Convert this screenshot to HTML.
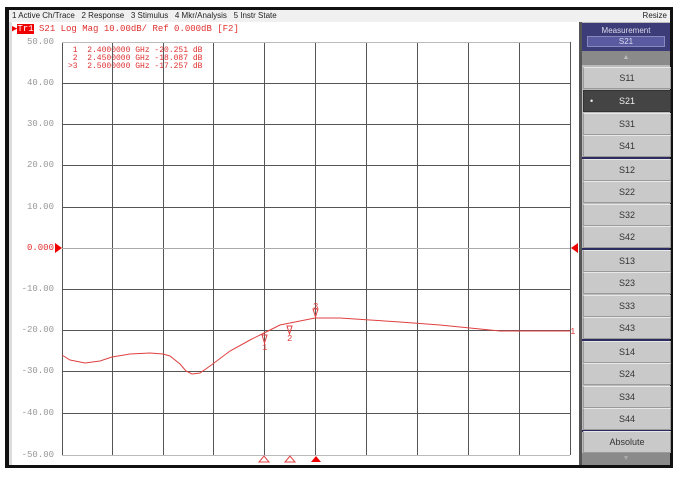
<!DOCTYPE html><html><head><style>
body{margin:0;width:678px;height:477px;background:#fff;position:relative;overflow:hidden;font-family:"Liberation Sans",sans-serif}
.a{position:absolute}
.btn{position:absolute;left:583px;width:86px;height:20px;background:#c9c9c9;border:1px solid #9a9a9a;border-top-color:#e8e8e8;font-size:9px;color:#333;text-align:center;line-height:20px}
.sep{position:absolute;left:582px;width:88px;height:2px;background:#2c2c5e}
.lab{position:absolute;left:14px;width:40px;text-align:right;font:9px "Liberation Mono",monospace;color:#999}
</style></head><body>
<div class="a" style="left:5px;top:7px;width:668px;height:461px;background:#111"></div>
<div class="a" style="left:9px;top:10px;width:661px;height:455px;background:#fff"></div>
<div class="a" style="left:9px;top:10px;width:661px;height:12px;background:#f0f0f0;font-size:8px;line-height:12px;color:#222"><span style="margin-left:3px">1 Active Ch/Trace&nbsp;&nbsp; 2 Response&nbsp;&nbsp; 3 Stimulus&nbsp;&nbsp; 4 Mkr/Analysis&nbsp;&nbsp; 5 Instr State</span><span style="position:absolute;right:3px">Resize</span></div>
<div class="a" style="left:9px;top:22px;width:3px;height:443px;background:#ddd"></div>
<div class="a" style="left:12px;top:24px;font:9px 'Liberation Mono',monospace;color:#e03030;white-space:pre"><span style="color:#e00">▶</span><span style="background:#e00;color:#fff">Tr1</span> S21 Log Mag 10.00dB/ Ref 0.000dB [F2]</div>
<div class="a" style="left:68px;top:47px;font:8px 'Liberation Mono',monospace;color:#e03030;white-space:pre;line-height:8px"> 1  2.4000000 GHz -20.251 dB
 2  2.4500000 GHz -18.087 dB
>3  2.5000000 GHz -17.257 dB</div>
<div class="lab" style="top:37px">50.00</div><div class="lab" style="top:78px">40.00</div><div class="lab" style="top:119px">30.00</div><div class="lab" style="top:160px">20.00</div><div class="lab" style="top:202px">10.00</div><div class="lab" style="top:243px;color:#e03030">0.000</div><div class="lab" style="top:284px">-10.00</div><div class="lab" style="top:325px">-20.00</div><div class="lab" style="top:366px">-30.00</div><div class="lab" style="top:408px">-40.00</div><div class="lab" style="top:450px">-50.00</div>
<svg class="a" style="left:0;top:0" width="678" height="477">
<g stroke="#555" stroke-width="1">
<path d="M62.5 42V455M112.5 42V455M163.5 42V455M213.5 42V455M264.5 42V455M315.5 42V455M366.5 42V455M417.5 42V455M468.5 42V455M519.5 42V455M570.5 42V455"/>
<path d="M62 83.5H570M62 124.5H570M62 165.5H570M62 207.5H570M62 289.5H570M62 330.5H570M62 371.5H570M62 413.5H570"/>
<path d="M62 248.5H570" stroke="#aaa"/>
</g>
<path d="M62 42.5H570M62 455.5H570" stroke="#bbb"/>
<polyline fill="none" stroke="#e04040" stroke-width="1" points="62,355 70,360 85,363 100,361 112,357 130,354 150,353 163,354 170,356 180,364 186,371 192,374 200,373 210,366 230,351 250,340 264,333 280,325 290,323 305,320 315,318 340,318 370,320 400,322 440,325 470,328 500,331 540,331 570,331"/>
<text x="570" y="334" font-size="9" fill="#e04040" font-family="Liberation Mono">1</text>
<g fill="none" stroke="#e04040" stroke-width="1"><path d="M262 335h5l-2.5 8z"/><path d="M287 326h5l-2.5 8z"/><path d="M313 309h5l-2.5 8z"/></g>
<g font-size="9" fill="#e04040" font-family="Liberation Mono"><text x="262" y="350">1</text><text x="287" y="341">2</text><text x="313" y="309">3</text></g>
<path d="M55 243v10l7-5z" fill="#e00"/><path d="M578 243v10l-7-5z" fill="#e00"/>
<g fill="none" stroke="#e04040"><path d="M259 462h10l-5-6z"/><path d="M285 462h10l-5-6z"/></g>
<path d="M311 462h10l-5-6z" fill="#e00"/>
</svg>
<div class="a" style="left:579px;top:22px;width:3px;height:443px;background:#555"></div>
<div class="a" style="left:582px;top:22px;width:88px;height:443px;background:#bbb"></div>
<div class="a" style="left:582px;top:23px;width:88px;height:28px;background:#3c3c78;color:#dde;font-size:8px;text-align:center"><div style="margin-top:3px">Measurement</div><div style="margin:1px 5px;background:#5a5aa0;border:1px solid #8888c0;line-height:9px">S21</div></div>
<div class="a" style="left:582px;top:51px;width:88px;height:14px;background:#8a8a8a;color:#bbb;font-size:7px;text-align:center;line-height:14px">▲</div>
<div class="btn" style="top:67px">S11</div>
<div class="btn" style="top:90px;background:#444;color:#eee;border-color:#333"><span style="position:absolute;left:6px">•</span>S21</div>
<div class="btn" style="top:113px">S31</div>
<div class="btn" style="top:135px">S41</div>
<div class="sep" style="top:157px"></div>
<div class="btn" style="top:159px">S12</div>
<div class="btn" style="top:181px">S22</div>
<div class="btn" style="top:204px">S32</div>
<div class="btn" style="top:226px">S42</div>
<div class="sep" style="top:248px"></div>
<div class="btn" style="top:250px">S13</div>
<div class="btn" style="top:272px">S23</div>
<div class="btn" style="top:295px">S33</div>
<div class="btn" style="top:317px">S43</div>
<div class="sep" style="top:339px"></div>
<div class="btn" style="top:341px">S14</div>
<div class="btn" style="top:363px">S24</div>
<div class="btn" style="top:386px">S34</div>
<div class="btn" style="top:408px">S44</div>
<div class="sep" style="top:430px"></div>
<div class="btn" style="top:431px">Absolute</div>
<div class="a" style="left:582px;top:453px;width:88px;height:12px;background:#8a8a8a;color:#aaa;font-size:7px;text-align:center;line-height:12px">▼</div>
</body></html>
